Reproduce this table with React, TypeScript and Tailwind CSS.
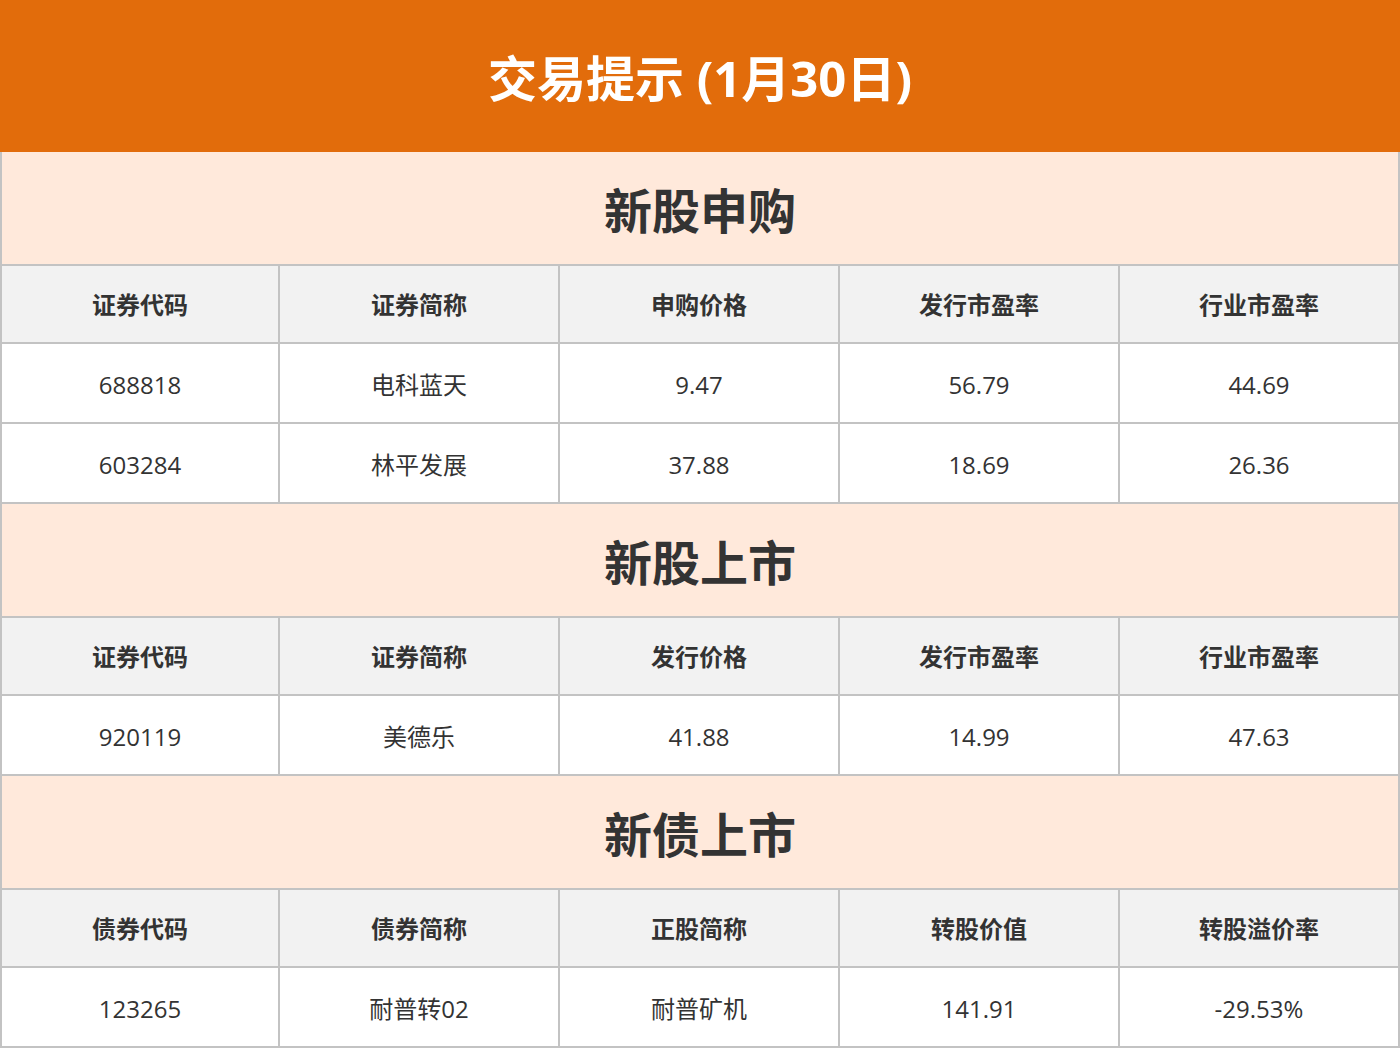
import React from "react";

const font = { fontFamily: '"Open Sans", "Noto Sans CJK SC", sans-serif' };

type Section = { title: string; head: string[]; rows: string[][] };

const sections: Section[] = [
  {
    title: "新股申购",
    head: ["证券代码", "证券简称", "申购价格", "发行市盈率", "行业市盈率"],
    rows: [
      ["688818", "电科蓝天", "9.47", "56.79", "44.69"],
      ["603284", "林平发展", "37.88", "18.69", "26.36"],
    ],
  },
  {
    title: "新股上市",
    head: ["证券代码", "证券简称", "发行价格", "发行市盈率", "行业市盈率"],
    rows: [["920119", "美德乐", "41.88", "14.99", "47.63"]],
  },
  {
    title: "新债上市",
    head: ["债券代码", "债券简称", "正股简称", "转股价值", "转股溢价率"],
    rows: [["123265", "耐普转02", "耐普矿机", "141.91", "-29.53%"]],
  },
];

export default function App() {
  return (
    <div className="w-[1400px] h-[1048px] bg-white" style={font}>
      <div className="h-[152px] bg-[#e26c0b] flex items-center justify-center pt-[4px]">
        <span className="text-white text-[49px] font-bold leading-none">交易提示 (1月30日)</span>
      </div>
      <div className="bg-[#c3c3c3] px-[2px] pb-[2px] flex flex-col gap-[2px]">
        {sections.map((s) => (
          <React.Fragment key={s.title}>
            <div className="h-[112px] bg-[#ffe9db] flex items-center justify-center pt-[5px]">
              <span className="text-[48px] font-bold text-[#333333] leading-none">{s.title}</span>
            </div>
            <div className="grid grid-cols-[276px_278px_278px_278px_278px] gap-[2px] h-[76px]">
              {s.head.map((h, i) => (
                <div key={i} className="bg-[#f2f2f2] flex items-center justify-center pt-[2px] text-[24px] font-bold text-[#333333]">
                  {h}
                </div>
              ))}
            </div>
            {s.rows.map((r, ri) => (
              <div key={ri} className="grid grid-cols-[276px_278px_278px_278px_278px] gap-[2px] h-[78px]">
                {r.map((c, i) => (
                  <div key={i} className="bg-white flex items-center justify-center pt-[3px] text-[24px] text-[#333333]">
                    {c}
                  </div>
                ))}
              </div>
            ))}
          </React.Fragment>
        ))}
      </div>
    </div>
  );
}
